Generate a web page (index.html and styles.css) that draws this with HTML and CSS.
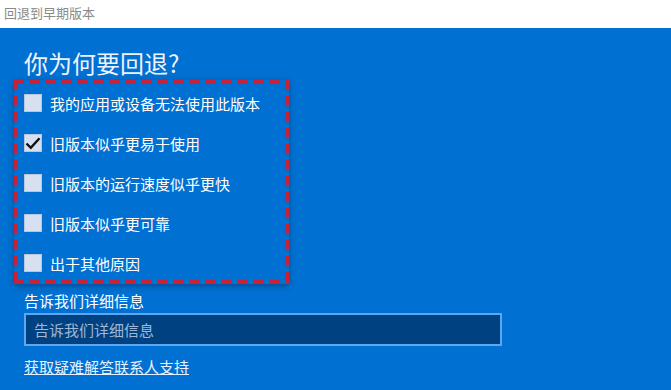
FILE: index.html
```html
<!doctype html>
<html lang="zh-CN">
  <head>
    <meta charset="UTF-8" />
    <meta name="viewport" content="width=device-width, initial-scale=1.0" />
    <title>回退到早期版本</title>
    <link rel="stylesheet" href="styles.css">
  </head>
  <body>

    <div class="title-bar">回退到早期版本</div>

    <div class="content">
      <h1 class="heading">你为何要回退?</h1>

      <div class="reason-box">
        <label class="reason"><span class="check"></span>我的应用或设备无法使用此版本</label>
        <label class="reason"><span class="check checked"><svg viewBox="0 0 18 18" width="18" height="18"><path d="M2.5 9.5 L6.8 13.8 L15.5 4.2" fill="none" stroke="#111" stroke-width="2.4"/></svg></span>旧版本似乎更易于使用</label>
        <label class="reason"><span class="check"></span>旧版本的运行速度似乎更快</label>
        <label class="reason"><span class="check"></span>旧版本似乎更可靠</label>
        <label class="reason"><span class="check"></span>出于其他原因</label>
      </div>

      <p class="field-label">告诉我们详细信息</p>
      <div class="text-input">告诉我们详细信息</div>

      <a class="help-link" href="#">获取疑难解答联系人支持</a>
    </div>

  </body>
</html>
```

FILE: styles.css
```css
body {
  margin: 0;
  background-color: #0070d2;
  font-family: "Noto Sans CJK SC", "Noto Sans", sans-serif;
  color: #ffffff;
  overflow: hidden;
}

.title-bar {
  height: 28px;
  line-height: 26px;
  padding-left: 4px;
  background-color: #ffffff;
  color: #8a8a8a;
  font-size: 13px;
}

.content {
  padding-left: 24px;
}

.heading {
  margin: 0 0 1px 0;
  padding-top: 19px;
  font-size: 24px;
  line-height: 32px;
  font-weight: normal;
  color: #eef4ff;
}

/* dashed red frame, long dashes drawn with gradients */
.reason-box {
  width: 267px;
  margin-left: -10px;
  padding: 3px 4px 1px 4px;
  background:
    repeating-linear-gradient(90deg, #c92238 0 10px, transparent 10px 16px) top left / 100% 4px no-repeat,
    repeating-linear-gradient(90deg, #c92238 0 10px, transparent 10px 16px) bottom left / 100% 4px no-repeat,
    repeating-linear-gradient(180deg, #c92238 0 10px, transparent 10px 16px) top left / 4px 100% no-repeat,
    repeating-linear-gradient(180deg, #c92238 0 10px, transparent 10px 16px) top right / 4px 100% no-repeat;
  box-shadow: 0 2px 6px rgba(0, 0, 0, 0.3);
}

.reason {
  display: flex;
  align-items: center;
  height: 40px;
  padding-left: 6px;
  font-size: 15px;
  color: #ffffff;
}

.check {
  width: 18px;
  height: 18px;
  margin-right: 8px;
  background-color: #d6e0f0;
  box-sizing: border-box;
  border: 1px solid #b8c6dc;
}
.check svg {
  display: block;
  margin: -1px;
}

.field-label {
  margin: 7px 0 0 0;
  font-size: 15px;
  line-height: 20px;
}

.text-input {
  width: 466px;
  height: 29px;
  margin-top: 2px;
  padding-left: 8px;
  border: 2px solid #5ea6f0;
  background-color: #004182;
  color: #9fb8d6;
  font-size: 15px;
  line-height: 29px;
}

.help-link {
  display: inline-block;
  margin-top: 11px;
  font-size: 15px;
  line-height: 20px;
  color: #e6f2ff;
  text-decoration: underline;
}
```
